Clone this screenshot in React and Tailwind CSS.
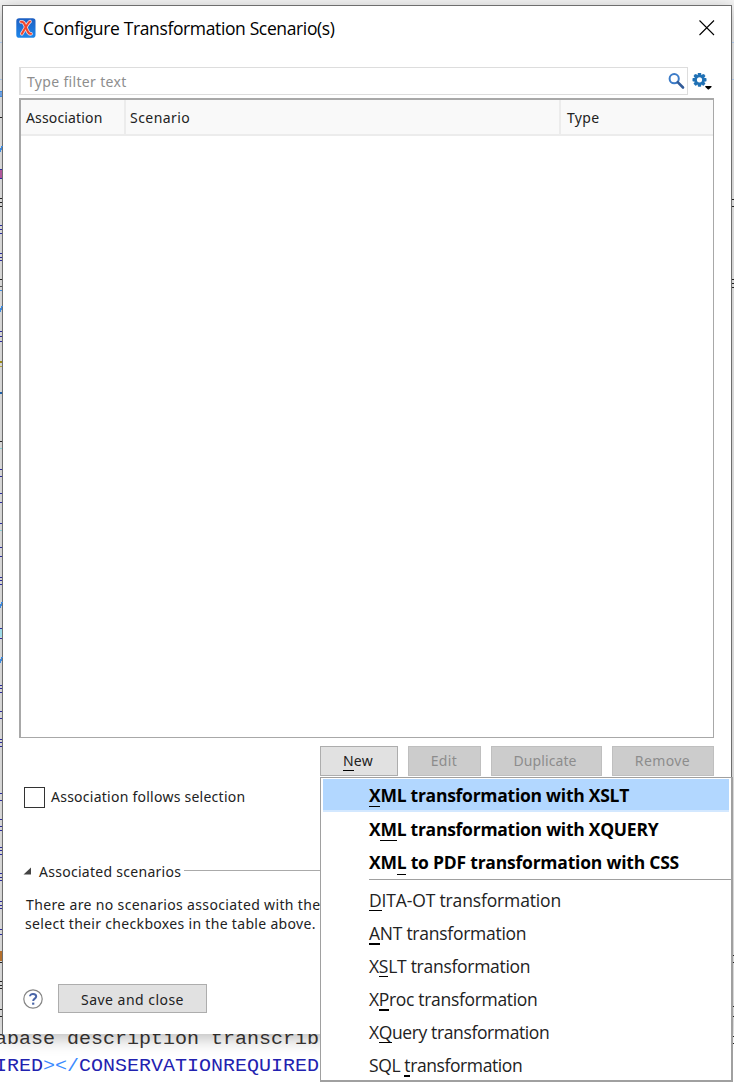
import React from 'react';

const BLUE = '#2a2a9c';
const BLACK = '#222222';
const SKY = '#3c8ae0';

const leftMarks = [
  [42, 1, '#a9c3e3'], [79, 1, '#a9c3e3'], [91, 1, SKY], [92, 4, '#6d9fe0'], [96, 1, SKY],
  [117, 1, BLACK], [169, 1, BLUE], [170, 8, '#b0589c'], [178, 1, BLUE],
  [198, 1, BLACK], [202, 1, BLACK], [206, 1, BLACK], [225, 1, BLUE], [229, 1, BLUE], [233, 1, BLUE],
  [253, 1, BLUE], [257, 1, BLUE], [260, 1, BLUE], [279, 1, BLACK], [286, 1, '#555555'], [290, 1, SKY],
  [331, 1, BLUE], [336, 1, BLUE], [341, 1, BLUE], [361, 2, '#9a8a14'], [366, 1, '#b5a63c'],
  [392, 2, '#1d5fa8'], [441, 1, BLACK], [448, 1, '#86cdd6'], [469, 1, BLUE], [476, 1, BLUE],
  [493, 1, BLUE], [502, 1, BLUE], [523, 1, BLUE], [530, 1, '#86cdd6'], [547, 1, BLUE], [556, 1, BLUE],
  [577, 1, BLUE], [580, 1, BLUE], [584, 1, BLUE], [628, 1, BLUE], [629, 8, '#9fdce8'], [638, 1, BLUE],
  [685, 1, BLUE], [688, 1, BLUE], [692, 1, BLUE], [711, 1, BLUE], [718, 1, BLUE], [739, 1, BLUE],
  [742, 1, BLUE], [746, 1, BLUE], [793, 1, BLUE], [800, 1, BLUE], [819, 1, BLUE], [826, 1, BLUE],
  [830, 1, BLUE], [847, 1, BLUE], [850, 1, BLUE], [854, 1, BLUE], [873, 1, BLUE], [877, 1, BLUE],
  [880, 1, BLUE], [901, 1, BLUE], [905, 1, BLUE], [908, 1, BLUE], [929, 1, BLUE], [934, 1, BLUE],
  [951, 10, '#b5702c'], [962, 1, BLACK], [981, 1, BLACK], [985, 1, BLACK], [988, 1, BLACK],
  [1009, 1, BLACK], [1016, 1, BLACK],
];

const rightMarks = [
  [42, 1, '#a9c3e3'], [79, 1, '#a9c3e3'], [199, 1, BLACK], [206, 1, BLACK],
  [279, 1, BLACK], [283, 1, BLACK], [287, 1, BLACK], [955, 1, BLACK], [962, 1, BLACK],
  [1006, 1, BLACK], [1016, 1, BLACK], [1036, 1, BLACK], [1043, 1, BLACK],
];

const slashes = [144, 304, 600, 655];

function EditorEdges() {
  return (
    <svg className="absolute inset-0" width="734" height="1084" shapeRendering="crispEdges">
      {leftMarks.map(([y, h, c]) => <rect key={y} x="0" y={y} width="2" height={h} fill={c} />)}
      {slashes.map((y) => <path key={y} d={`M0 ${y + 8}L2 ${y + 2}`} stroke={SKY} strokeWidth="1.5" />)}
      {rightMarks.map(([y, h, c]) => <rect key={y} x="732" y={y} width="2" height={h} fill={c} />)}
    </svg>
  );
}

function AppLogo() {
  return (
    <svg width="20" height="20" viewBox="0 0 20 20">
      <defs>
        <linearGradient id="logo" x1="0" y1="0" x2="0" y2="1">
          <stop offset="0" stopColor="#1d5fc2" />
          <stop offset="1" stopColor="#1d86ea" />
        </linearGradient>
      </defs>
      <rect x="0.3" y="0.3" width="19.2" height="19.4" rx="2.8" fill="url(#logo)" />
      <path d="M5 3.800C7.800 3.200 8.600 6 10 9.600S12.400 16.200 15 15.800" fill="none" stroke="#efd9dc" strokeWidth="3.600" strokeLinecap="round" />
      <path d="M14 3.600C11.500 5 8.500 12 5.800 15.800" fill="none" stroke="#efd9dc" strokeWidth="3.600" strokeLinecap="round" />
      <path d="M5 3.800C7.800 3.200 8.600 6 10 9.600S12.400 16.200 15 15.800" fill="none" stroke="#f2452a" strokeWidth="2" strokeLinecap="round" />
      <path d="M14 3.600C11.500 5 8.500 12 5.800 15.800" fill="none" stroke="#f2452a" strokeWidth="2" strokeLinecap="round" />
    </svg>
  );
}

function SearchIcon() {
  return (
    <svg width="18" height="18" viewBox="0 0 18 18" fill="none">
      <circle cx="6.200" cy="6.700" r="4.600" stroke="#3c7cc8" strokeWidth="2" />
      <path d="M9.700 10.200L15 15.500" stroke="#315b98" strokeWidth="2.600" strokeLinecap="round" />
    </svg>
  );
}

function GearIcon() {
  return (
    <svg width="21" height="20" viewBox="0 0 21 20">
      <g transform="translate(7.500 6.800)">
        {[0, 45, 90, 135].map((a) => (
          <rect key={a} x="-1.700" y="-7" width="3.400" height="14" rx="0.700" fill="#2071b5" transform={`rotate(${a})`} />
        ))}
        <circle r="5.300" fill="#2071b5" />
        <circle r="2.600" fill="#ffffff" />
      </g>
      <path d="M13.300 12.900H19.500V14L16.800 16.500H16L13.300 14Z" fill="#000000" />
    </svg>
  );
}

const key = "relative after:absolute after:left-0 after:right-0 after:h-px after:bg-black after:content-['']";

function Menu() {
  const thin = 'after:bottom-[1px]';
  const thick = 'after:bottom-0 after:h-[2px]!';
  const items = [
    ['', 'X', 'ML transformation with XSLT', 'tracking-[-0.26px]', 'after:bottom-0'],
    ['X', 'M', 'L transformation with XQUERY', 'tracking-[-0.26px]', 'after:bottom-0'],
    ['XM', 'L', ' to PDF transformation with CSS', 'tracking-[-0.22px]', 'after:-bottom-px'],
  ];
  const plain = [
    ['', 'D', 'ITA-OT transformation', 'tracking-[-0.15px]', thin],
    ['', 'A', 'NT transformation', 'tracking-[-0.26px]', thick],
    ['X', 'S', 'LT transformation', 'tracking-[-0.28px]', thin],
    ['X', 'P', 'roc transformation', 'tracking-[-0.32px]', thick],
    ['X', 'Q', 'uery transformation', 'tracking-[-0.38px]', thin],
    ['SQL ', 't', 'ransformation', 'tracking-[-0.4px]', thick],
  ];
  return (
    <div className="absolute left-[320px] top-[777px] h-[305px] w-[413px] border-l border-t border-r-2 border-b-2 border-[#a0a0a0] bg-white pt-px text-[17.5px] text-black">
      {items.map(([a, k, b, t, u], i) => (
        <div key={i} className={`ml-[2px] mr-[2px] flex h-[33px] items-center whitespace-pre pl-[46px] font-bold ${t} ${i === 0 ? 'border-b-2 border-[#d3e8ff] bg-[#b2d7ff]' : ''}`}>
          <span className="leading-6">{a}<span className={`${key} ${u}`}>{k}</span>{b}</span>
        </div>
      ))}
      <div className="ml-[48px] mt-[1px] h-px bg-[#a0a0a0]" />
      <div className="pt-[3px]">
        {plain.map(([a, k, b, t, u]) => (
          <div key={b} className={`flex h-[33px] items-center whitespace-pre pl-[48px] text-[#222] ${t}`}>
            <span className="leading-6">{a}<span className={`${key} ${u}`}>{k}</span>{b}</span>
          </div>
        ))}
      </div>
    </div>
  );
}

const disabled = 'border border-[#bfbfbf] bg-[#cccccc] text-[#8c8c8c]';

export default function App() {
  return (
    <div className="relative h-[1084px] w-[734px] overflow-hidden bg-white font-['Open_Sans',sans-serif]">
      <div className="absolute inset-x-0 top-0 h-[1034px] bg-[#f4f4f4]" />
      <div className="absolute inset-x-0 top-[1024px] flex h-[60px] flex-col">
        <div className="-ml-[5px] h-[27px] origin-bottom scale-y-[0.88] whitespace-pre font-['Liberation_Mono',monospace] text-[20px] leading-[27px] text-[#3a3634]">abase description transcrib</div>
        <div className="-ml-[5px] h-[27px] origin-bottom scale-y-[0.88] whitespace-pre font-['Liberation_Mono',monospace] text-[20px] leading-[27px] text-[#2222b0]">
          IRED<span className="text-[#3c8cff]">&gt;&lt;/</span>CONSERVATIONREQUIRED
        </div>
      </div>

      <main className="absolute left-[2px] top-[5px] flex h-[1029px] w-[730px] flex-col border-x border-t border-[#6e6e6e] bg-white font-['Noto_Sans',sans-serif] text-[14px] text-[#222] shadow-[0_4px_16px_rgba(0,0,0,0.28)]">
        <header className="flex h-[61px] shrink-0 items-start pl-[13px] pr-[16px] pt-[12px]">
          <AppLogo />
          <h1 className="ml-[7px] mt-[-2px] flex-1 whitespace-nowrap font-['Open_Sans',sans-serif] text-[17.5px] leading-6 tracking-[-0.37px] text-black">Configure Transformation Scenario(s)</h1>
          <svg className="mt-[2px]" width="16" height="16" viewBox="0 0 16 16"><path d="M0.500 0.500L15 15M15 0.500L0.500 15" stroke="#000" strokeWidth="1.100" /></svg>
        </header>

        <div className="flex h-[28px] shrink-0 pl-[16px]">
          <div className="flex w-[669px] items-center border border-l-2 border-[#dddddd] pl-[6px] tracking-[0.33px] text-[#8e8e8e]">
            <span className="flex-1">Type filter text</span>
            <span className="mr-px"><SearchIcon /></span>
          </div>
          <span className="ml-[4px] mt-[6px]"><GearIcon /></span>
        </div>

        <section className="ml-[16px] mt-[3px] h-[640px] w-[695px] shrink-0 border border-l-2 border-t-2 border-[#a8a8a8] bg-white">
          <div className="flex h-[36px] border-b-2 border-[#ececec] bg-[#f9f9f9] leading-[35px]">
            <div className="w-[105px] border-r-2 border-[#ececec] pl-[5px] tracking-[0.15px]">Association</div>
            <div className="w-[435px] border-r-2 border-[#ececec] pl-[4px] tracking-[0.45px]">Scenario</div>
            <div className="pl-[6px] tracking-[0.3px]">Type</div>
          </div>
        </section>

        <div className="mr-[17px] mt-[8px] flex h-[30px] shrink-0 justify-end leading-none">
          <button className="w-[78px] border border-[#adadad] bg-[#e1e1e1] pr-[2px] tracking-[0.3px]"><span className={`${key} after:-bottom-px`}>N</span>ew</button>
          <button className={`ml-[10px] w-[73px] pr-px tracking-[0.4px] ${disabled}`}>Edit</button>
          <button className={`ml-[10px] w-[111px] pr-[3px] tracking-[0.1px] ${disabled}`}>Duplicate</button>
          <button className={`ml-[10px] w-[102px] pr-px tracking-[0.4px] ${disabled}`}>Remove</button>
        </div>

        <label className="mt-[11px] flex h-[20px] items-center pl-[21px]">
          <span className="size-[21px] border border-[#333] bg-white" />
          <span className="mb-[2px] ml-[6px] tracking-[0.25px]">Association follows selection</span>
        </label>

        <div className="mt-[54px] flex h-[20px] items-center pl-[20px]">
          <svg width="9" height="8" viewBox="0 0 9 8"><path d="M0.500 7.500H8V0.500Z" fill="#444" /></svg>
          <h2 className="ml-[7px] tracking-[0.28px]">Associated scenarios</h2>
          <div className="mb-[2px] ml-[3px] h-px flex-1 bg-[#aaaaaa]" />
        </div>

        <p className="mt-[14px] w-[320px] whitespace-pre pl-[23px] leading-[19px] tracking-[0.35px]">
          There are no scenarios associated with the{'\n'}
          <span className="-ml-px tracking-[0.32px]">select their checkboxes in the table above.</span>
        </p>

        <footer className="mt-[51px] flex h-[29px] items-center pl-[20px]">
          <svg width="20" height="20" viewBox="0 0 20 20" fill="none">
            <circle cx="10" cy="10" r="9.200" stroke="#858585" strokeWidth="1.200" />
            <path d="M7 7.300C7 4.100 13.200 4.200 13.200 7.500C13.200 9.700 10.200 9.600 10.200 12" stroke="#4a65a8" strokeWidth="2" />
            <path d="M9.100 13.600H11.300V15.700H9.100Z" fill="#4a65a8" />
          </svg>
          <button className="ml-[15px] h-[29px] w-[149px] border border-[#adadad] bg-[#e1e1e1] pt-px tracking-[0.47px]">Save and close</button>
        </footer>
      </main>

      <EditorEdges />
      <Menu />
    </div>
  );
}
